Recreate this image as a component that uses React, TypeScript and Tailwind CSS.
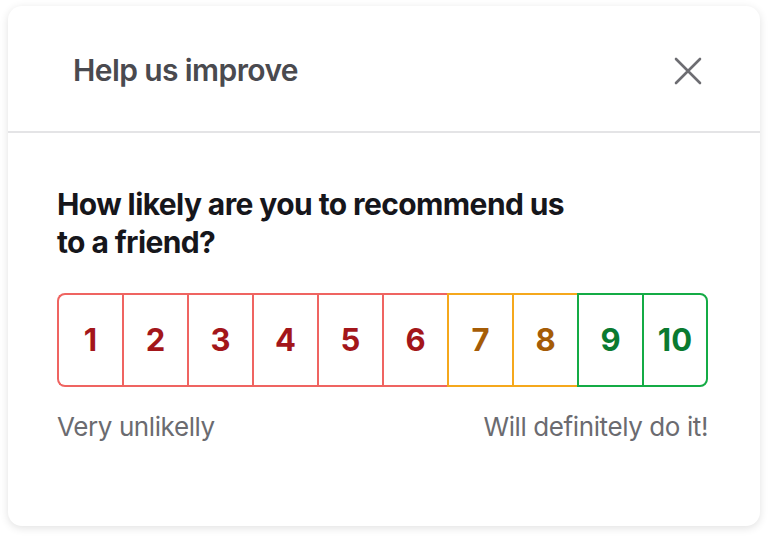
const SCORES = [1, 2, 3, 4, 5, 6, 7, 8, 9, 10];

function scoreStyle(n: number): string {
  if (n <= 6) return 'border-[#ef6461] text-[#a3161a]';
  if (n <= 8) return 'border-[#f5a81c] text-[#a55c06]';
  return 'border-[#14ab45] text-[#0a7a30]';
}

function CloseIcon() {
  return (
    <svg width="28" height="28" viewBox="0 0 28 28" className="text-[#6d6d72]">
      <path d="M2 2 L26 26 M26 2 L2 26" stroke="currentColor" strokeWidth="2.6" strokeLinecap="round" />
    </svg>
  );
}

export default function App() {
  return (
    <div
      className="w-[768px] h-[536px] bg-white pt-[6px] pl-[8px]"
      style={{ fontFamily: 'Inter, "Noto Sans", sans-serif' }}
    >
      <div className="w-[752px] h-[520px] bg-white rounded-[14px] shadow-[0_2px_8px_rgba(0,0,0,0.12)] flex flex-col">
        <div className="h-[127px] flex items-center justify-between pl-[65px] pr-[58px] pt-[4px] border-b-2 border-[#e4e4e6]">
          <h1 className="text-[30px] font-semibold text-[#4a4a4f] tracking-[-0.6px]">Help us improve</h1>
          <CloseIcon />
        </div>
        <div className="pl-[49px] pr-[52px] pt-[52px]">
          <h2 className="text-[30px] leading-[38px] font-bold text-[#16161b] max-w-[525px] tracking-[-0.6px]">
            How likely are you to recommend us to a friend?
          </h2>
          <div className="flex mt-[32px]">
            {SCORES.map(n => (
              <button
                key={n}
                className={`w-[65px] h-[94px] flex items-center justify-center border-t-2 border-b-2 border-l-2 text-[31px] font-bold ${scoreStyle(n)} ${
                  n === 1 ? 'rounded-l-[8px]' : ''
                } ${n === 10 ? 'border-r-2 w-[66px] rounded-r-[8px]' : ''}`}
              >
                {n}
              </button>
            ))}
          </div>
          <div className="flex justify-between mt-[27px] text-[26px] leading-none text-[#6b6b70] tracking-[-0.4px]">
            <span>Very unlikelly</span>
            <span>Will definitely do it!</span>
          </div>
        </div>
      </div>
    </div>
  );
}
